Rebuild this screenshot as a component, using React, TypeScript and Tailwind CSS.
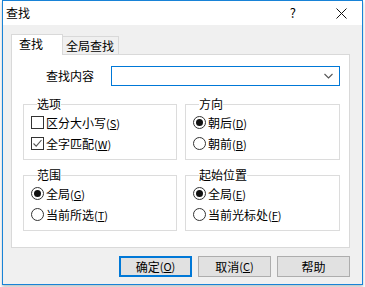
import React from 'react';

const font = "font-['Noto_Sans_CJK_SC',sans-serif]";

const Key: React.FC<{ k: string }> = ({ k }) => (
  <span className="text-[11px]">
    (<u className="underline-offset-1">{k}</u>)
  </span>
);

const CheckBox: React.FC<{ checked?: boolean }> = ({ checked }) => (
  <span className="w-[13px] h-[13px] shrink-0 border border-[#333] bg-white flex items-center justify-center">
    {checked && (
      <svg width="11" height="11" viewBox="0 0 11 11">
        <path d="M1.5 5.5 L4.2 8.2 L9.5 2" stroke="#555" strokeWidth="1.1" fill="none" />
      </svg>
    )}
  </span>
);

const Radio: React.FC<{ checked?: boolean }> = ({ checked }) => (
  <span className="w-[13px] h-[13px] shrink-0 rounded-full border border-[#333] bg-white flex items-center justify-center">
    {checked && <span className="w-[7px] h-[7px] rounded-full bg-[#111]" />}
  </span>
);

const Row: React.FC<{ control: React.ReactNode; label: string; k: string }> = ({ control, label, k }) => (
  <div className="h-[21px] flex items-center gap-[2px]">
    {control}
    <span>
      {label}
      <Key k={k} />
    </span>
  </div>
);

const Group: React.FC<{ title: string; children: React.ReactNode }> = ({ title, children }) => (
  <fieldset className="border border-[#dcdcdc] pl-[7px] pt-[1px] pb-[5px] min-w-0">
    <legend className="ml-[6px] leading-[14px]">{title}</legend>
    {children}
  </fieldset>
);

const Button: React.FC<{ primary?: boolean; children: React.ReactNode }> = ({ primary, children }) => (
  <button
    className={
      primary
        ? 'w-[73px] h-[21px] border-2 border-[#0078d7] bg-[#e1e1e1] flex items-center justify-center'
        : 'w-[73px] h-[21px] border border-[#adadad] bg-[#e1e1e1] flex items-center justify-center'
    }
  >
    {children}
  </button>
);

export default function App() {
  return (
    <div className={`w-[365px] h-[287px] bg-white text-[12px] text-black ${font}`}>
      <div className="ml-[2px] w-[361px] h-[285px] border border-[#1883d7] flex flex-col shadow-[0_2px_3px_rgba(0,0,0,0.25)]">
        {/* title bar */}
        <div className="h-[24px] bg-white flex items-center pl-[3px] shrink-0">
          <span className="leading-[14px]">查找</span>
          <span className="ml-auto mr-[40px] text-[13px]">?</span>
          <svg width="11" height="11" viewBox="0 0 11 11" className="mr-[15px]">
            <path d="M0.5 0.5 L10.5 10.5 M10.5 0.5 L0.5 10.5" stroke="#111" strokeWidth="1" />
          </svg>
        </div>

        {/* body */}
        <div className="flex-1 bg-[#f0f0f0] flex flex-col">
          <div className="flex items-end pl-[8px] pt-[9px]">
            <div className="w-[52px] h-[21px] -mb-px relative z-10 bg-white border border-b-0 border-[#d9d9d9] pl-[7px] pt-[2px] leading-[14px]">
              查找
            </div>
            <div className="w-[56px] h-[18px] border-t border-r border-[#d9d9d9] bg-[#f0f0f0] pl-[3px] pt-[2px] leading-[14px]">
              全局查找
            </div>
          </div>

          <div className="ml-[8px] w-[339px] h-[194px] border border-[#d9d9d9] bg-white pt-[11px] pl-[11px] pr-[9px]">
            <div className="flex items-center h-[20px]">
              <span className="ml-[23px]">查找内容</span>
              <div className="ml-[17px] flex-1 h-[20px] border border-[#0078d7] flex items-center justify-end pr-[6px]">
                <svg width="9" height="6" viewBox="0 0 9 6">
                  <path d="M0.5 1 L4.5 5 L8.5 1" stroke="#555" strokeWidth="1.1" fill="none" />
                </svg>
              </div>
            </div>

            <div className="grid grid-cols-[154px_155px] gap-x-[8px] gap-y-[8px] mt-[11px]">
              <Group title="选项">
                <Row control={<CheckBox />} label="区分大小写" k="S" />
                <Row control={<CheckBox checked />} label="全字匹配" k="W" />
              </Group>
              <Group title="方向">
                <Row control={<Radio checked />} label="朝后" k="D" />
                <Row control={<Radio />} label="朝前" k="B" />
              </Group>
              <Group title="范围">
                <Row control={<Radio checked />} label="全局" k="G" />
                <Row control={<Radio />} label="当前所选" k="T" />
              </Group>
              <Group title="起始位置">
                <Row control={<Radio checked />} label="全局" k="E" />
                <Row control={<Radio />} label="当前光标处" k="F" />
              </Group>
            </div>
          </div>

          <div className="flex justify-end gap-[6px] pr-[12px] mt-[8px]">
            <Button primary>
              确定<Key k="O" />
            </Button>
            <Button>
              取消<Key k="C" />
            </Button>
            <Button>帮助</Button>
          </div>
        </div>
      </div>
    </div>
  );
}
